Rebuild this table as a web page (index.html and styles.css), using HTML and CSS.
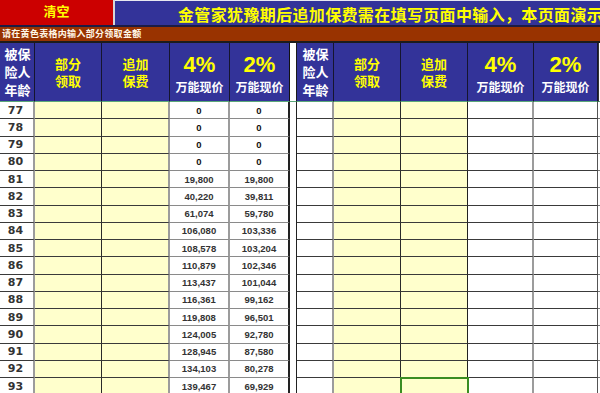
FILE: index.html
```html
<!DOCTYPE html>
<html lang="zh-CN">
<head>
<meta charset="utf-8">
<link rel="stylesheet" href="styles.css">
</head>
<body>
<div class="top">
  <div class="clear">清空</div>
  <div class="title">金管家犹豫期后追加保费需在填写页面中输入，本页面演示</div>
</div>
<div class="note">请在黄色表格内输入部分领取金额</div>
<div class="sheet">
  <div class="r head">
    <div class="h h-age">被保<br>险人<br>年龄</div>
    <div class="h h-y">部分<br>领取</div>
    <div class="h h-y">追加<br>保费</div>
    <div class="h h-p"><span class="pct">4%</span><span class="wn">万能现价</span></div>
    <div class="h h-p h-end"><span class="pct">2%</span><span class="wn">万能现价</span></div>
    <div class="h-gap"></div>
    <div class="h h-age">被保<br>险人<br>年龄</div>
    <div class="h h-y">部分<br>领取</div>
    <div class="h h-y">追加<br>保费</div>
    <div class="h h-p"><span class="pct">4%</span><span class="wn">万能现价</span></div>
    <div class="h h-p"><span class="pct">2%</span><span class="wn">万能现价</span></div>
    <div class="h-x"></div>
  </div>

  <div class="r"><span class="c age">77</span><span class="c in"></span><span class="c in in2"></span><span class="c v v4 z">0</span><span class="c v v2 z">0</span><span class="gap"></span><span class="c age b-r"></span><span class="c in"></span><span class="c in in3"></span><span class="c e4"></span><span class="c e5"></span><span class="c x"></span></div>
  <div class="r"><span class="c age">78</span><span class="c in"></span><span class="c in in2"></span><span class="c v v4 z">0</span><span class="c v v2 z">0</span><span class="gap"></span><span class="c age b-r"></span><span class="c in"></span><span class="c in in3"></span><span class="c e4"></span><span class="c e5"></span><span class="c x"></span></div>
  <div class="r"><span class="c age">79</span><span class="c in"></span><span class="c in in2"></span><span class="c v v4 z">0</span><span class="c v v2 z">0</span><span class="gap"></span><span class="c age b-r"></span><span class="c in"></span><span class="c in in3"></span><span class="c e4"></span><span class="c e5"></span><span class="c x"></span></div>
  <div class="r"><span class="c age">80</span><span class="c in"></span><span class="c in in2"></span><span class="c v v4 z">0</span><span class="c v v2 z">0</span><span class="gap"></span><span class="c age b-r"></span><span class="c in"></span><span class="c in in3"></span><span class="c e4"></span><span class="c e5"></span><span class="c x"></span></div>
  <div class="r"><span class="c age">81</span><span class="c in"></span><span class="c in in2"></span><span class="c v v4">19,800</span><span class="c v v2">19,800</span><span class="gap"></span><span class="c age b-r"></span><span class="c in"></span><span class="c in in3"></span><span class="c e4"></span><span class="c e5"></span><span class="c x"></span></div>
  <div class="r"><span class="c age">82</span><span class="c in"></span><span class="c in in2"></span><span class="c v v4">40,220</span><span class="c v v2">39,811</span><span class="gap"></span><span class="c age b-r"></span><span class="c in"></span><span class="c in in3"></span><span class="c e4"></span><span class="c e5"></span><span class="c x"></span></div>
  <div class="r"><span class="c age">83</span><span class="c in"></span><span class="c in in2"></span><span class="c v v4">61,074</span><span class="c v v2">59,780</span><span class="gap"></span><span class="c age b-r"></span><span class="c in"></span><span class="c in in3"></span><span class="c e4"></span><span class="c e5"></span><span class="c x"></span></div>
  <div class="r"><span class="c age">84</span><span class="c in"></span><span class="c in in2"></span><span class="c v v4">106,080</span><span class="c v v2">103,336</span><span class="gap"></span><span class="c age b-r"></span><span class="c in"></span><span class="c in in3"></span><span class="c e4"></span><span class="c e5"></span><span class="c x"></span></div>
  <div class="r"><span class="c age">85</span><span class="c in"></span><span class="c in in2"></span><span class="c v v4">108,578</span><span class="c v v2">103,204</span><span class="gap"></span><span class="c age b-r"></span><span class="c in"></span><span class="c in in3"></span><span class="c e4"></span><span class="c e5"></span><span class="c x"></span></div>
  <div class="r"><span class="c age">86</span><span class="c in"></span><span class="c in in2"></span><span class="c v v4">110,879</span><span class="c v v2">102,346</span><span class="gap"></span><span class="c age b-r"></span><span class="c in"></span><span class="c in in3"></span><span class="c e4"></span><span class="c e5"></span><span class="c x"></span></div>
  <div class="r"><span class="c age">87</span><span class="c in"></span><span class="c in in2"></span><span class="c v v4">113,437</span><span class="c v v2">101,044</span><span class="gap"></span><span class="c age b-r"></span><span class="c in"></span><span class="c in in3"></span><span class="c e4"></span><span class="c e5"></span><span class="c x"></span></div>
  <div class="r"><span class="c age">88</span><span class="c in"></span><span class="c in in2"></span><span class="c v v4">116,361</span><span class="c v v2">99,162</span><span class="gap"></span><span class="c age b-r"></span><span class="c in"></span><span class="c in in3"></span><span class="c e4"></span><span class="c e5"></span><span class="c x"></span></div>
  <div class="r"><span class="c age">89</span><span class="c in"></span><span class="c in in2"></span><span class="c v v4">119,808</span><span class="c v v2">96,501</span><span class="gap"></span><span class="c age b-r"></span><span class="c in"></span><span class="c in in3"></span><span class="c e4"></span><span class="c e5"></span><span class="c x"></span></div>
  <div class="r"><span class="c age">90</span><span class="c in"></span><span class="c in in2"></span><span class="c v v4">124,005</span><span class="c v v2">92,780</span><span class="gap"></span><span class="c age b-r"></span><span class="c in"></span><span class="c in in3"></span><span class="c e4"></span><span class="c e5"></span><span class="c x"></span></div>
  <div class="r"><span class="c age">91</span><span class="c in"></span><span class="c in in2"></span><span class="c v v4">128,945</span><span class="c v v2">87,580</span><span class="gap"></span><span class="c age b-r"></span><span class="c in"></span><span class="c in in3"></span><span class="c e4"></span><span class="c e5"></span><span class="c x"></span></div>
  <div class="r"><span class="c age">92</span><span class="c in"></span><span class="c in in2"></span><span class="c v v4">134,103</span><span class="c v v2">80,278</span><span class="gap"></span><span class="c age b-r"></span><span class="c in"></span><span class="c in in3"></span><span class="c e4"></span><span class="c e5"></span><span class="c x"></span></div>
  <div class="r"><span class="c age">93</span><span class="c in"></span><span class="c in in2"></span><span class="c v v4">139,467</span><span class="c v v2">69,929</span><span class="gap"></span><span class="c age b-r"></span><span class="c in"></span><span class="c in in3 sel"></span><span class="c e4"></span><span class="c e5"></span><span class="c x"></span></div>
</div>
</body>
</html>
```

FILE: styles.css
```css
html, body {
  margin: 0;
  padding: 0;
  background: #ffffff;
}
body {
  width: 600px;
  height: 393px;
  overflow: hidden;
  font-family: "Liberation Sans", "Noto Sans CJK SC", sans-serif;
}

.top {
  display: flex;
  height: 25px;
  border-bottom: 2px solid #1c1c44;
}
.clear {
  width: 113px;
  flex: none;
  background: #cc0000;
  border-right: 2px solid #d6d6d6;
  color: #ffff00;
  font-family: "Noto Sans CJK SC", sans-serif;
  font-weight: bold;
  font-size: 13px;
  line-height: 21px;
  text-align: center;
}
.title {
  flex: 1;
  min-width: 0;
  background: #333399;
  border-top: 1px solid #e8e8f0;
  color: #ffff00;
  font-family: "Noto Sans CJK SC", sans-serif;
  font-weight: bold;
  font-size: 16px;
  letter-spacing: 0.35px;
  line-height: 20px;
  padding: 3px 0 0 63px;
  white-space: nowrap;
  overflow: hidden;
}

.note {
  height: 14px;
  background: #993300;
  border-bottom: 2px solid #1c1c1c;
  color: #fff8e8;
  font-family: "Noto Sans CJK SC", sans-serif;
  font-weight: bold;
  font-size: 9px;
  letter-spacing: 0.3px;
  line-height: 14px;
  padding-left: 2px;
  white-space: nowrap;
}

.r {
  display: grid;
  grid-template-columns: 35px 67px 68px 60px 60px 7px 37px 67px 67px 66px 64px 1fr;
  height: 17.25px;
}
.r > * {
  box-sizing: border-box;
  min-width: 0;
}

/* header */
.head {
  height: 59px;
}
.h {
  background: #333399;
  border-right: 1px solid #15152e;
  border-bottom: 1px solid #5aa77a;
  font-family: "Noto Sans CJK SC", sans-serif;
  font-weight: bold;
  display: flex;
  flex-direction: column;
  align-items: center;
  justify-content: center;
  text-align: center;
}
.h-age {
  color: #ffffff;
  font-size: 13px;
  line-height: 18px;
  padding-left: 1px;
}
.h-y {
  color: #ffff00;
  font-size: 13px;
  line-height: 17.5px;
}
.h-p {
  padding-top: 3px;
}
.h-end {
  border-right: 1px solid #111111;
}
.pct {
  color: #ffff00;
  font-family: "Liberation Sans", sans-serif;
  font-size: 22px;
  line-height: 25px;
}
.wn {
  color: #ffffff;
  font-size: 12px;
  line-height: 16px;
  margin-top: 2px;
}
.h-gap {
  background: #ffffff;
  border-right: 1px solid #1a1a1a;
  border-bottom: 1px solid #5aa77a;
}
.h-x {
  background: #ffffff;
  border-left: 1px solid #333333;
  border-bottom: 1px solid #5aa77a;
}

/* body cells */
.c {
  border-bottom: 1px solid #3a3a3a;
  background: #ffffff;
  color: #333333;
  display: flex;
  align-items: center;
  justify-content: center;
}
.age {
  border-right: 2px solid #9c9c9c;
  font-family: "DejaVu Sans", sans-serif;
  font-weight: bold;
  font-size: 11px;
  padding-right: 2px;
}
.in {
  background: #ffffcc;
  border-right: 1px solid #2a2a2a;
}
.in2 {
  border-right: 2px solid #9c9c9c;
}
.in3 {
  border-right: 1px solid #222222;
}
.v {
  font-family: "Liberation Sans", sans-serif;
  font-weight: bold;
  font-size: 9.5px;
  border-bottom-color: #8a8a8a;
}
.z {
  color: #111111;
}
.v4 {
  border-right: 2px solid #9c9c9c;
}
.v2 {
  border-right: 2px solid #222222;
}
.gap {
  background: #ffffff;
  border-right: 1px solid #222222;
}
.e4 {
  border-right: 2px solid #9c9c9c;
}
.e5 {
  border-right: 1px solid #555555;
}
.x {
  border-bottom-color: #777777;
}
.sel {
  outline: 2px solid #3a8d22;
  outline-offset: -1px;
  position: relative;
  z-index: 1;
}
```
